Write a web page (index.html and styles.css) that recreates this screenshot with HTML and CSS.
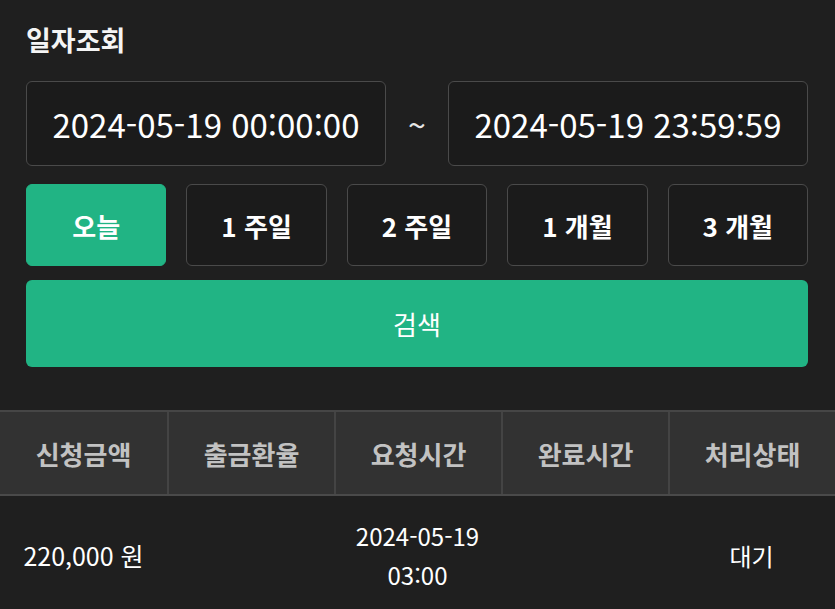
FILE: index.html
```html
<!DOCTYPE html>
<html lang="ko">
<head>
<meta charset="utf-8">
<link rel="stylesheet" href="styles.css">
</head>
<body>
<div class="page">
  <section class="search">
    <h2 class="title">일자조회</h2>
    <div class="date-row">
      <div class="date-input">2024-05-19 00:00:00</div>
      <div class="tilde">~</div>
      <div class="date-input">2024-05-19 23:59:59</div>
    </div>
    <div class="period-row">
      <button class="period active">오늘</button>
      <button class="period">1 주일</button>
      <button class="period">2 주일</button>
      <button class="period">1 개월</button>
      <button class="period">3 개월</button>
    </div>
    <button class="search-btn">검색</button>
  </section>
  <div class="table">
    <div class="thead">
      <div class="th">신청금액</div>
      <div class="th">출금환율</div>
      <div class="th">요청시간</div>
      <div class="th">완료시간</div>
      <div class="th">처리상태</div>
    </div>
    <div class="tr">
      <div class="td">220,000 원</div>
      <div class="td"></div>
      <div class="td td-time">2024-05-19<br>03:00</div>
      <div class="td"></div>
      <div class="td td-state">대기</div>
    </div>
  </div>
</div>
</body>
</html>
```

FILE: styles.css
```css
* { box-sizing: border-box; }
html, body {
  margin: 0;
  padding: 0;
  background: #1f1f1f;
  height: 100%;
  overflow: hidden;
}
body {
  font-family: "Noto Sans CJK KR", "Noto Sans", sans-serif;
  color: #ffffff;
}
.search {
  padding: 24px 27px 0 26px;
}
.title {
  margin: 0;
  font-size: 27px;
  font-weight: 700;
  line-height: 32px;
  color: #f4f4f4;
}
.date-row {
  display: flex;
  align-items: center;
  margin-top: 25px;
}
.date-input {
  width: 360px;
  height: 85px;
  border: 1px solid #4a4a4a;
  border-radius: 6px;
  background: #1b1b1b;
  display: flex;
  align-items: center;
  justify-content: center;
  font-size: 33px;
  color: #ffffff;
}
.tilde {
  flex: 1;
  text-align: center;
  font-size: 32px;
  line-height: 1;
  color: #e6e6e6;
}
.period-row {
  display: grid;
  grid-template-columns: repeat(5, 1fr);
  gap: 20px;
  margin-top: 18px;
}
.period {
  height: 82px;
  border: 1px solid #4a4a4a;
  border-radius: 6px;
  background: #1b1b1b;
  color: #ffffff;
  font-family: inherit;
  font-size: 26px;
  font-weight: 700;
  padding: 0;
}
.period.active {
  background: #21b484;
  border-color: #21b484;
}
.search-btn {
  display: block;
  width: 100%;
  height: 87px;
  margin-top: 14px;
  border: none;
  border-radius: 6px;
  background: #21b484;
  color: #ffffff;
  font-family: inherit;
  font-size: 26px;
  font-weight: 400;
  padding: 0;
}
.table {
  margin-top: 43px;
}
.thead {
  display: grid;
  grid-template-columns: repeat(5, 1fr);
  background: #323232;
  border-top: 2px solid #464646;
  border-bottom: 2px solid #4a4a4a;
}
.th {
  height: 82px;
  display: flex;
  align-items: center;
  justify-content: center;
  font-size: 26px;
  font-weight: 700;
  color: #c2c2c2;
  border-left: 2px solid #444;
}
.th:first-child { border-left: none; }
.tr {
  display: grid;
  grid-template-columns: repeat(5, 1fr);
}
.td {
  height: 118px;
  display: flex;
  align-items: center;
  justify-content: center;
  text-align: center;
  font-size: 25px;
  line-height: 39px;
  color: #ffffff;
}
.td-time,
.td-state {
  font-size: 24px;
}
```
